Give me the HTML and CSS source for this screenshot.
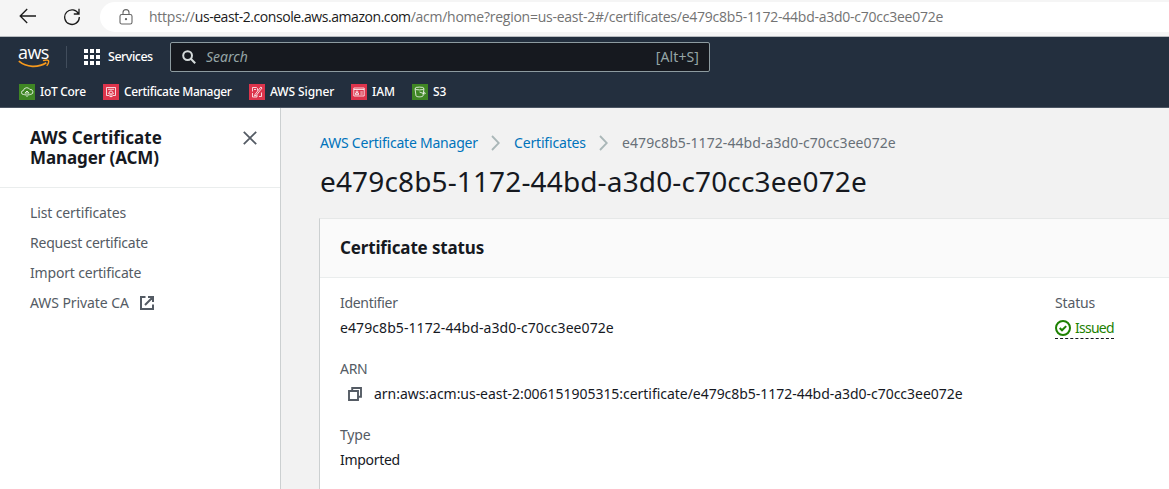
FILE: index.html
```html
<!DOCTYPE html>
<html lang="en">
<head>
<meta charset="utf-8">
<title>AWS Certificate Manager</title>
<link rel="stylesheet" href="styles.css">
</head>
<body>
<div class="browser-bar">
  <svg class="back" width="18" height="16" viewBox="0 0 18 16" fill="none" stroke="#1b1b1b" stroke-width="1.3"><path d="M8.2 1 1.2 8l7 7M1.2 8H17"/></svg>
  <svg class="reload" width="18" height="18" viewBox="0 0 18 18" fill="none" stroke="#1b1b1b" stroke-width="1.3"><path d="M15.6 6A7.3 7.3 0 1 0 16.3 9M16 .8V6h-5.2"/></svg>
  <div class="address">
    <svg class="lock" width="14" height="16" viewBox="0 0 14 16" fill="none" stroke="#666" stroke-width="1.1"><rect x="1" y="5.5" width="12" height="9.5" rx="1.8"/><path d="M4 5.5V3.6a3 3 0 0 1 6 0v1.9"/><circle cx="7" cy="10.2" r=".6" fill="#666"/></svg>
    <span class="url"><span class="scheme">https://</span><span class="host">us-east-2.console.aws.amazon.com</span><span class="path">/acm/home?region=us-east-2#/certificates/e479c8b5-1172-44bd-a3d0-c70cc3ee072e</span></span>
  </div>
</div>
<header class="console-head">
  <div class="head-row">
    <div class="logo">
      <span class="logo-word">aws</span>
      <svg class="smile" width="32" height="10" viewBox="0 0 32 10" fill="none" stroke="#f79a1c"><path d="M.8 2.2C8.5 8.6 20 9 28.3 3.8" stroke-width="1.7"/><path d="M25 1.7c2.2-.8 4.6-.8 5.3-.2.6.9 0 3.5-1.6 5.4" stroke-width="1.4"/></svg>
    </div>
    <span class="divider"></span>
    <svg class="grid" width="16" height="16" viewBox="0 0 16 16" fill="#fff"><path d="M0 0h4v4H0zM6 0h4v4H6zM12 0h4v4h-4zM0 6h4v4H0zM6 6h4v4H6zM12 6h4v4h-4zM0 12h4v4H0zM6 12h4v4H6zM12 12h4v4h-4z"/></svg>
    <span class="services">Services</span>
    <div class="search">
      <svg width="14" height="14" viewBox="0 0 14 14" fill="none" stroke="#d5dbdb" stroke-width="2"><circle cx="5.6" cy="5.6" r="4.4"/><path d="m8.8 8.8 4.4 4.4"/></svg>
      <span class="search-word">Search</span>
      <span class="shortcut">[Alt+S]</span>
    </div>
  </div>
  <nav class="favorites">
    <a class="fav iot"><svg class="tile green" viewBox="0 0 16 16"><path d="M5.5 10.5H4.6a2 2 0 0 1-.2-4 3.5 3.5 0 0 1 6.5-1 2.5 2.5 0 0 1 1 4.9h-1.4M8 7v6M6 9l2-2 2 2M6.2 9.3v2.3M9.8 9.3v2.3"/></svg><span>IoT Core</span></a>
    <a class="fav acm"><svg class="tile red" viewBox="0 0 16 16"><path d="M6 11.5H3.5v-8h9v8H10M5 5.3h6M5 9.3h1.2M10 9.3h1"/><circle cx="8" cy="8.5" r="1.6"/><path d="M7 10v3l1-.8 1 .8v-3"/></svg><span>Certificate Manager</span></a>
    <a class="fav signer"><svg class="tile red" viewBox="0 0 16 16"><path d="M3.5 7.5v-4h4l1 1v2M5 5.5h2M3.5 9v4h4.5v-2M6 10.5 11.8 3l1.2 1-5.7 7.3-1.8.6zM10 12.5h2.5v-4"/></svg><span>AWS Signer</span></a>
    <a class="fav iam"><svg class="tile red" viewBox="0 0 16 16"><path d="M2.8 4h10.4v8H2.8zM2.8 5.5h10.4M9.3 8h2.5M9.3 10h2.5M4.5 10.7V9h3v1.7z"/><circle cx="6" cy="7.8" r=".9"/></svg><span>IAM</span></a>
    <a class="fav s3"><svg class="tile green" viewBox="0 0 16 16"><ellipse cx="7.5" cy="4.5" rx="4.5" ry="1.4"/><path d="m3 4.5 1 7.3c.3 1.4 6.7 1.4 7 0l1-7.3M7.5 8l4.8 1.8c1.5.4 1.3-.8-.5-2"/></svg><span>S3</span></a>
  </nav>
</header>
<div class="page">
  <aside class="side">
    <div class="side-head">
      <h2 class="side-title"><span class="t1">AWS Certificate</span> <span class="t2">Manager (ACM)</span></h2>
      <svg class="close" width="14" height="14" viewBox="0 0 14 14" fill="none" stroke="#545b64" stroke-width="1.8"><path d="m.8.8 12.4 12.4M13.2.8.8 13.2"/></svg>
    </div>
    <nav class="side-nav">
      <a class="n1">List certificates</a>
      <a class="n2">Request certificate</a>
      <a class="n3">Import certificate</a>
      <a class="n4">AWS Private CA<svg class="external" width="14" height="14" viewBox="0 0 14 14" fill="none" stroke="#545b64" stroke-width="2"><path d="M5.5 1H1v12h12V8.5M8 1h5v5M13 1 5 9"/></svg></a>
    </nav>
  </aside>
  <main class="content">
    <nav class="crumbs">
      <a class="c1">AWS Certificate Manager</a>
      <svg width="9" height="16" viewBox="0 0 9 16" fill="none" stroke="#aab7b8" stroke-width="1.8"><path d="m1 1 6.8 7L1 15"/></svg>
      <a class="c2">Certificates</a>
      <svg width="9" height="16" viewBox="0 0 9 16" fill="none" stroke="#aab7b8" stroke-width="1.8"><path d="m1 1 6.8 7L1 15"/></svg>
      <span class="c3">e479c8b5-1172-44bd-a3d0-c70cc3ee072e</span>
    </nav>
    <h1 class="title">e479c8b5-1172-44bd-a3d0-c70cc3ee072e</h1>
    <section class="card">
      <h2 class="card-head"><span>Certificate status</span></h2>
      <div class="card-body">
        <div class="col">
          <div class="field"><div class="label l1">Identifier</div><div class="value v1">e479c8b5-1172-44bd-a3d0-c70cc3ee072e</div></div>
          <div class="field"><div class="label l2">ARN</div><div class="value arn"><svg width="14" height="14" viewBox="0 0 14 14" fill="none" stroke="#545b64" stroke-width="1.9"><path d="M1 4h9v9H1z"/><path d="M4.2 4V1H13v8.8h-3"/></svg><span class="v2">arn:aws:acm:us-east-2:006151905315:certificate/e479c8b5-1172-44bd-a3d0-c70cc3ee072e</span></div></div>
          <div class="field"><div class="label l3">Type</div><div class="value v3">Imported</div></div>
        </div>
        <div class="field status"><div class="label l4">Status</div>
          <div class="issued"><svg width="16" height="16" viewBox="0 0 16 16" fill="none" stroke="#1d8102" stroke-width="2"><circle cx="8" cy="8" r="7"/><path d="m4.7 8 2.3 2.3 4.2-4.2"/></svg><span class="v4">Issued</span></div>
        </div>
      </div>
    </section>
  </main>
</div>
</body>
</html>
```
FILE: styles.css
```css
* { box-sizing: border-box; }
body { margin: 0; width: 1169px; height: 489px; overflow: hidden; display: flex; flex-direction: column; font: 14px/20px "Noto Sans", sans-serif; color: #16191f; background: #f2f2f2; }
svg { flex: none; display: block; }
h1, h2 { margin: 0; }
.browser-bar { flex: none; height: 37px; display: flex; align-items: flex-start; background: #f5f5f5; border-bottom: 1px solid #b8bcc0; }
.back { margin: 8px 0 0 19px; }
.reload { margin: 8px 0 0 26px; }
.address { margin: 2px 0 0 19px; flex: 1; height: 30px; padding-left: 19px; background: #fff; border-radius: 15px 0 0 15px; display: flex; align-items: center; }
.lock { margin-right: 16px; }
.url { font: 14px/20px "Open Sans", sans-serif; white-space: nowrap; color: #737373; letter-spacing: -.25px; }
.host { color: #1b1b1b; letter-spacing: -.44px; }
.console-head { flex: none; height: 71px; background: #232f3e; border-bottom: 1px solid #4b5563; color: #fff; }
.head-row { display: flex; align-items: center; height: 40px; }
.logo { width: 32px; margin-left: 18px; height: 23px; }
.logo-word { display: block; height: 13px; font: 500 18px/12px "Open Sans", sans-serif; letter-spacing: -.6px; }
.divider { width: 1px; height: 22px; background: #414d5c; margin: 0 17px 0 16px; }
.services { margin-left: 8px; width: 62px; font-weight: 500; font-size: 12.5px; letter-spacing: -.5px; }
.search { width: 540px; height: 30px; border: 1px solid #8d9ba0; border-radius: 2px; background: #16191f; display: flex; align-items: center; padding: 0 10px 0 11px; color: #95a5a6; }
.search-word { margin-left: 10px; font-style: italic; }
.shortcut { margin-left: auto; letter-spacing: .1px; }
.favorites { display: flex; height: 30px; padding-left: 19px; align-items: center; font-size: 12px; font-weight: 500; }
.fav { display: flex; align-items: center; gap: 5px; white-space: nowrap; }
.iot { width: 84px; letter-spacing: -.3px; } .acm { width: 146px; letter-spacing: -.34px; } .signer { width: 102px; letter-spacing: -.1px; } .iam { width: 61px; }
.tile { width: 16px; height: 16px; fill: none; stroke: #fff; stroke-width: .8; }
.green { background: #3f8624; } .red { background: #dd344c; }
.page { flex: 1; display: flex; min-height: 0; }
.side { width: 281px; flex: none; background: #fff; border-right: 1px solid #ccd0d1; }
.side-head { height: 80px; border-bottom: 1px solid #eaeded; display: flex; justify-content: space-between; padding: 20px 23px 0 30px; }
.side-title { font-size: 17px; line-height: 20px; font-weight: 700; white-space: nowrap; }
.side-title span { display: block; height: 20px; }
.t1 { letter-spacing: .1px; } .t2 { letter-spacing: -.1px; }
.close { margin-top: 3px; }
.side-nav { padding: 15px 30px; color: #545b64; display: flex; flex-direction: column; gap: 10px; }
.n1 { letter-spacing: -.12px; } .n2 { letter-spacing: -.22px; } .n3 { letter-spacing: -.18px; }
.n4 { display: flex; align-items: center; letter-spacing: -.08px; }
.external { margin-left: 11px; }
.content { flex: 1; min-width: 0; padding: 25px 0 0 38px; display: flex; flex-direction: column; }
.crumbs { display: flex; align-items: center; height: 20px; color: #687078; white-space: nowrap; padding-left: 1px; }
.crumbs a { color: #0073bb; }
.crumbs .c1 { width: 171px; letter-spacing: -.22px; }
.crumbs .c2 { width: 85px; margin-left: 14px; letter-spacing: -.17px; }
.c3 { margin-left: 14px; letter-spacing: .08px; }
.title { font-size: 28px; line-height: 36px; font-weight: 400; margin: 10px 0 19px 1px; letter-spacing: .14px; }
.card { flex: 1; background: #fff; border-left: 1px solid #ccd0d1; border-top: 1px solid #e6e8e8; }
.card-head { height: 59px; background: #fafafa; border-bottom: 1px solid #eaeded; font-size: 17px; line-height: 22px; padding: 18px 20px; letter-spacing: -.15px; }
.card-body { display: flex; padding: 15px 0 0 20px; white-space: nowrap; }
.col { width: 715px; }
.field { height: 66px; }
.label { color: #545b64; }
.l1, .l2, .v3 { letter-spacing: -.3px; }
.l3, .l4 { letter-spacing: -.15px; }
.v1 { letter-spacing: .08px; }
.v2 { letter-spacing: -.035px; }
.v4 { letter-spacing: -.75px; }
.value { margin-top: 5px; }
.arn { display: flex; align-items: center; padding-left: 8px; gap: 12px; }
.issued { margin-top: 4px; display: inline-flex; align-items: center; gap: 4px; height: 22px; color: #1d8102; border-bottom: 1px dashed #16191f; }
```
